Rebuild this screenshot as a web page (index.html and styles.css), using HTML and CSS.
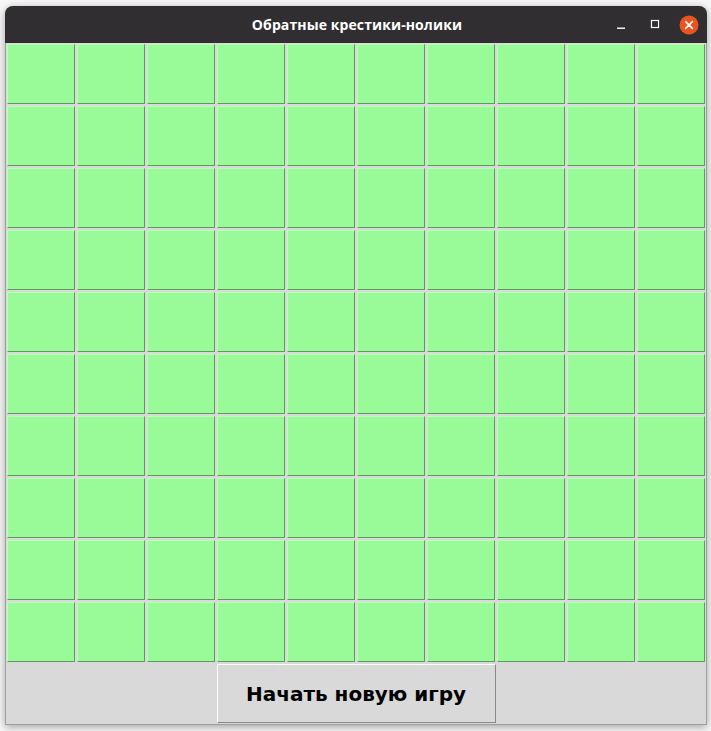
FILE: index.html
```html
<!DOCTYPE html>
<html lang="ru">
<head>
<meta charset="utf-8">
<title>Обратные крестики-нолики</title>
<link rel="stylesheet" href="styles.css">
</head>
<body>
<div class="window">
  <div class="titlebar">
    <div class="spacer"></div>
    <div class="title">Обратные крестики-нолики</div>
    <div class="controls">
      <span class="ctl ctl-min"><svg width="20" height="20" viewBox="0 0 20 20"><rect x="6" y="12.5" width="8" height="1.4" fill="#fff"/></svg></span>
      <span class="ctl ctl-max"><svg width="20" height="20" viewBox="0 0 20 20"><rect x="6.5" y="6.5" width="7" height="7" fill="none" stroke="#fff" stroke-width="1.2"/></svg></span>
      <span class="ctl ctl-close"><svg width="20" height="20" viewBox="0 0 20 20"><circle cx="10" cy="10" r="9.5" fill="#e95420"/><path d="M6.6 6.6 L13.4 13.4 M13.4 6.6 L6.6 13.4" stroke="#fff" stroke-width="1.5" stroke-linecap="round"/></svg></span>
    </div>
  </div>
  <div class="board">
    <div class="cell"></div><div class="cell"></div><div class="cell"></div><div class="cell"></div><div class="cell"></div><div class="cell"></div><div class="cell"></div><div class="cell"></div><div class="cell"></div><div class="cell"></div>
    <div class="cell"></div><div class="cell"></div><div class="cell"></div><div class="cell"></div><div class="cell"></div><div class="cell"></div><div class="cell"></div><div class="cell"></div><div class="cell"></div><div class="cell"></div>
    <div class="cell"></div><div class="cell"></div><div class="cell"></div><div class="cell"></div><div class="cell"></div><div class="cell"></div><div class="cell"></div><div class="cell"></div><div class="cell"></div><div class="cell"></div>
    <div class="cell"></div><div class="cell"></div><div class="cell"></div><div class="cell"></div><div class="cell"></div><div class="cell"></div><div class="cell"></div><div class="cell"></div><div class="cell"></div><div class="cell"></div>
    <div class="cell"></div><div class="cell"></div><div class="cell"></div><div class="cell"></div><div class="cell"></div><div class="cell"></div><div class="cell"></div><div class="cell"></div><div class="cell"></div><div class="cell"></div>
    <div class="cell"></div><div class="cell"></div><div class="cell"></div><div class="cell"></div><div class="cell"></div><div class="cell"></div><div class="cell"></div><div class="cell"></div><div class="cell"></div><div class="cell"></div>
    <div class="cell"></div><div class="cell"></div><div class="cell"></div><div class="cell"></div><div class="cell"></div><div class="cell"></div><div class="cell"></div><div class="cell"></div><div class="cell"></div><div class="cell"></div>
    <div class="cell"></div><div class="cell"></div><div class="cell"></div><div class="cell"></div><div class="cell"></div><div class="cell"></div><div class="cell"></div><div class="cell"></div><div class="cell"></div><div class="cell"></div>
    <div class="cell"></div><div class="cell"></div><div class="cell"></div><div class="cell"></div><div class="cell"></div><div class="cell"></div><div class="cell"></div><div class="cell"></div><div class="cell"></div><div class="cell"></div>
    <div class="cell"></div><div class="cell"></div><div class="cell"></div><div class="cell"></div><div class="cell"></div><div class="cell"></div><div class="cell"></div><div class="cell"></div><div class="cell"></div><div class="cell"></div>
  </div>
  <div class="footer">
    <button class="new-game">Начать новую игру</button>
  </div>
</div>
</body>
</html>
```

FILE: styles.css
```css
* { box-sizing: border-box; }

html, body {
  margin: 0;
  padding: 0;
}

body {
  background: #f7f7f7;
  padding: 6px 0 0 5px;
  width: 711px;
  height: 731px;
  overflow: hidden;
}

.window {
  width: 702px;
  border-left: 1px solid #9e9e9e;
  border-right: 1px solid #9e9e9e;
  border-bottom: 1px solid #9e9e9e;
  border-radius: 8px 8px 0 0;
  background: #d9d9d9;
  box-shadow: 0 2px 8px rgba(0, 0, 0, 0.35);
}

.titlebar {
  height: 37px;
  margin: 0 -1px;
  background: #302e30;
  border-radius: 8px 8px 0 0;
  display: grid;
  grid-template-columns: 1fr auto 1fr;
  align-items: center;
}

.title {
  color: #ffffff;
  font-family: "Open Sans", "Noto Sans", sans-serif;
  font-weight: 700;
  font-size: 14px;
  letter-spacing: 0.1px;
  padding-left: 2px;
}

.controls {
  justify-self: end;
  display: flex;
  gap: 14px;
  padding-right: 8px;
}

.ctl {
  display: block;
  width: 20px;
  height: 20px;
}

.ctl svg { display: block; }

.ctl-max svg { position: relative; top: -1px; }

.board {
  display: grid;
  grid-template-columns: repeat(10, 68px);
  grid-template-rows: repeat(10, 60px);
  gap: 2px;
  padding: 1px;
  background: #d9d9d9;
}

.cell {
  background: #98fb98;
  border: 1px solid;
  border-color: #b9fdb9 #5f9a5f #5f9a5f #b9fdb9;
}

.footer {
  height: 61px;
  display: flex;
  justify-content: center;
  align-items: stretch;
  padding: 1px 0 0;
}

.new-game {
  width: 279px;
  margin: 0 0 1px 0;
  background: #d9d9d9;
  border: 1px solid;
  border-color: #ffffff #888888 #888888 #ffffff;
  font-family: "DejaVu Sans", sans-serif;
  font-weight: 700;
  font-size: 20px;
  color: #000000;
  padding: 0;
  cursor: pointer;
}
```
